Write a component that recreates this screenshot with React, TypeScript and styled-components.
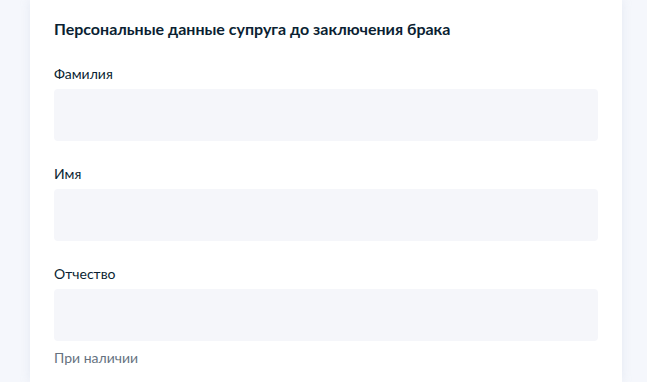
import styled, { createGlobalStyle } from "styled-components";

const GlobalStyle = createGlobalStyle`
  html, body {
    margin: 0;
    padding: 0;
    background: #f5f7fc;
    font-family: Lato, "Noto Sans", sans-serif;
  }
`;

const Page = styled.div`
  display: flex;
  padding: 0 25px 0 30px;
  height: 382px;
  overflow: hidden;
`;

const Card = styled.section`
  flex: 1;
  background: #ffffff;
  box-shadow: 0 0 10px rgba(160, 175, 200, 0.18);
  padding: 19px 24px 0 24px;
`;

const Title = styled.h2`
  margin: 0 0 25px;
  font-size: 16px;
  line-height: 20px;
  font-weight: 700;
  color: #0b1f33;
`;

const Field = styled.div`
  display: flex;
  flex-direction: column;
  margin-bottom: 23px;
`;

const Label = styled.label`
  font-size: 14px;
  line-height: 20px;
  color: #0b1f33;
  margin-bottom: 5px;
`;

const Input = styled.input`
  height: 52px;
  box-sizing: border-box;
  border: none;
  border-radius: 4px;
  background: #f5f6fa;
  padding: 0 16px;
  font-family: inherit;
  font-size: 14px;
  outline: none;
`;

const Hint = styled.div`
  margin-top: 7px;
  font-size: 14px;
  line-height: 20px;
  color: #66727f;
`;

type FieldProps = { label: string; hint?: string };

function TextField({ label, hint }: FieldProps) {
  return (
    <Field>
      <Label>{label}</Label>
      <Input type="text" />
      {hint && <Hint>{hint}</Hint>}
    </Field>
  );
}

export default function App() {
  return (
    <>
      <GlobalStyle />
      <Page>
        <Card>
          <Title>Персональные данные супруга до заключения брака</Title>
          <TextField label="Фамилия" />
          <TextField label="Имя" />
          <TextField label="Отчество" hint="При наличии" />
        </Card>
      </Page>
    </>
  );
}
